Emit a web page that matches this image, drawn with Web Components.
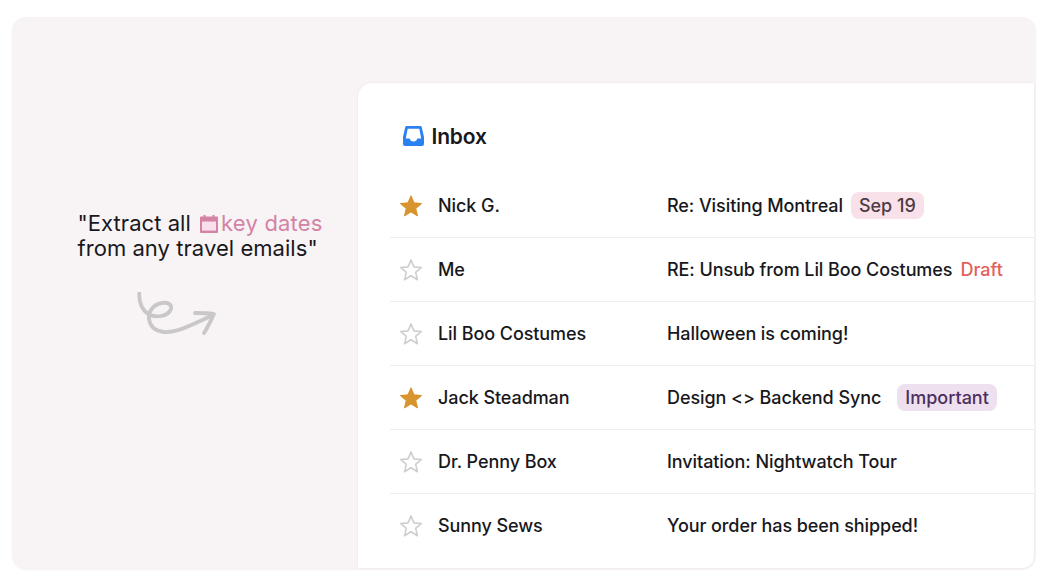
<!DOCTYPE html>
<html>
<head>
<meta charset="utf-8">
<style>
    html, body { margin: 0; background: #fff; }
    body {
        width: 1050px;
        height: 585px;
        box-sizing: border-box;
        padding: 17px 14px 15px 12px;
        font-family: Inter, "Liberation Sans", sans-serif;
        color: #18181c;
        overflow: hidden;
    }
</style>
</head>
<body>
<demo-panel>
    <prompt-note slot="note"></prompt-note>
    <inbox-card>
        <mail-row sender="Nick G." subject="Re: Visiting Montreal" starred>
            <mail-tag kind="date">Sep 19</mail-tag>
        </mail-row>
        <mail-row sender="Me" subject="RE: Unsub from Lil Boo Costumes">
            <mail-tag kind="draft">Draft</mail-tag>
        </mail-row>
        <mail-row sender="Lil Boo Costumes" subject="Halloween is coming!"></mail-row>
        <mail-row sender="Jack Steadman" subject="Design &lt;&gt; Backend Sync" starred>
            <mail-tag kind="important">Important</mail-tag>
        </mail-row>
        <mail-row sender="Dr. Penny Box" subject="Invitation: Nightwatch Tour"></mail-row>
        <mail-row sender="Sunny Sews" subject="Your order has been shipped!" last></mail-row>
    </inbox-card>
</demo-panel>

<script>
// Panel de fondo con la nota a la izquierda y la tarjeta a la derecha
class DemoPanel extends HTMLElement {
    constructor() {
        super();
        this.attachShadow({ mode: 'open' });
        this.shadowRoot.innerHTML = `
            <style>
                :host {
                    display: flex;
                    height: 100%;
                    background: #f8f4f5;
                    border-radius: 14px;
                    overflow: hidden;
                    box-shadow: 0 0 2px rgba(0,0,0,0.03);
                }
                .left { width: 346px; flex: none; }
                .right { flex: 1; min-width: 0; padding: 66px 2px 2px 0; display: flex; }
            </style>
            <div class="left"><slot name="note"></slot></div>
            <div class="right"><slot></slot></div>
        `;
    }
}

class PromptNote extends HTMLElement {
    constructor() {
        super();
        this.attachShadow({ mode: 'open' });
        this.shadowRoot.innerHTML = `
            <style>
                :host {
                    display: block;
                    padding: 194px 0 0 65.5px;
                    font-size: 22px;
                    line-height: 25px;
                    letter-spacing: 0.05px;
                    color: #18181c;
                    white-space: nowrap;
                }
                .key { color: #d482a6; letter-spacing: 0.2px; }
                .cal { width: 18px; height: 18px; vertical-align: -2px; margin: 0 3px 0 3px; }
                .arrow { display: block; margin: 31px 0 0 58px; }
            </style>
            <div>"Extract all <span class="key"><svg class="cal" viewBox="0 0 18 18"><path fill="#f8dfe9" d="M2 6h14v9H2z"/><path fill="#d482a6" d="M3.500 0h2v1.500h7V0h2v1.500H17a1 1 0 0 1 1 1V17a1 1 0 0 1-1 1H1a1 1 0 0 1-1-1V2.500a1 1 0 0 1 1-1h2.500zM2 6.500V15.500h14V6.500z"/></svg>key dates</span></div>
            <div>from any travel emails"</div>
            <svg class="arrow" width="82" height="48" viewBox="0 0 82 48" fill="none" stroke="#c9c7c7" stroke-width="3.800" stroke-linecap="round" stroke-linejoin="round">
                <path d="M3.300 1.300C3 8 5 17 12 22C19 26 32 25 35 17C36 12 31 10 26 11C18 12 12 19 13 27C14 35 20 39 28 40C40 41 56 33 77 23"/>
                <path d="M59 21C66 21 72 21 78 22C75 28 72 35 68 41"/>
            </svg>
        `;
    }
}

class InboxCard extends HTMLElement {
    constructor() {
        super();
        this.attachShadow({ mode: 'open' });
        this.shadowRoot.innerHTML = `
            <style>
                :host {
                    display: block;
                    flex: 1;
                    background: #fff;
                    border-radius: 14px 0 12px 0;
                    box-shadow: 0 0 2px rgba(0,0,0,0.09);
                    padding: 0 0 0 32px;
                }
                .head {
                    display: flex;
                    align-items: center;
                    gap: 7.5px;
                    height: 91px;
                    padding: 15px 0 0 13px;
                    box-sizing: border-box;
                    font-size: 21px;
                    font-weight: 600;
                    letter-spacing: -0.15px;
                    color: #18181c;
                }
            </style>
            <div class="head">
                <svg width="21" height="20" viewBox="0 0 21 20">
                    <path fill="#2a82f2" d="M3.700 0H17.300a1.500 1.500 0 0 1 1.500 1.200L21 11V18a2 2 0 0 1-2 2H2a2 2 0 0 1-2-2V11L2.200 1.200A1.500 1.500 0 0 1 3.700 0z"/>
                    <path fill="#fff" d="M4.700 2.800H16.300L18.200 12.500H14.300c-.4 2-1.700 3-3.800 3s-3.400-1-3.800-3H2.800z"/>
                </svg>
                Inbox
            </div>
            <slot></slot>
        `;
    }
}

class MailRow extends HTMLElement {
    constructor() {
        super();
        this.attachShadow({ mode: 'open' });
    }

    connectedCallback() {
        const starred = this.hasAttribute('starred');
        const starPath = 'M11 1.800l2.700 6.300 6.800.6-5.200 4.500 1.600 6.700L11 16.300l-5.900 3.600 1.600-6.700L1.500 8.700l6.800-.6z';
        const star = starred
            ? `<path fill="#d8942e" stroke="#d8942e" stroke-width="1" stroke-linejoin="round" d="${starPath}"/>`
            : `<path fill="none" stroke="#cfcfd1" stroke-width="1.500" stroke-linejoin="round" d="${starPath}"/>`;

        this.shadowRoot.innerHTML = `
            <style>
                :host {
                    display: grid;
                    grid-template-columns: 48px 229px 1fr;
                    align-items: center;
                    height: 64px;
                    box-sizing: border-box;
                    border-bottom: 1px solid ${this.hasAttribute('last') ? 'transparent' : '#efedef'};
                    font-size: 18px;
                    font-weight: 500;
                    letter-spacing: -0.08px;
                    color: #18181c;
                }
                svg { display: block; margin-left: 9px; }
                .subject { display: flex; align-items: center; white-space: nowrap; }
            </style>
            <svg width="24" height="24" viewBox="0 0 22 22">${star}</svg>
            <div>${this.getAttribute('sender')}</div>
            <div class="subject"><span class="text"></span><slot></slot></div>
        `;
        this.shadowRoot.querySelector('.text').textContent = this.getAttribute('subject');
    }
}

class MailTag extends HTMLElement {
    constructor() {
        super();
        this.attachShadow({ mode: 'open' });
    }

    connectedCallback() {
        const kinds = {
            date: 'margin-left: 8px; background: #f9e1ea; color: #4d3b45; padding: 0 8px; border-radius: 8px; height: 27px;',
            draft: 'margin-left: 8px; color: #e45f5b;',
            important: 'margin-left: 16px; background: #eee0ee; color: #4b2f5f; padding: 0 8px; border-radius: 8px; height: 27px;'
        };
        this.shadowRoot.innerHTML = `
            <style>
                :host {
                    display: inline-flex;
                    align-items: center;
                    letter-spacing: 0;
                    ${kinds[this.getAttribute('kind')]}
                }
            </style>
            <slot></slot>
        `;
    }
}

customElements.define('demo-panel', DemoPanel);
customElements.define('prompt-note', PromptNote);
customElements.define('inbox-card', InboxCard);
customElements.define('mail-row', MailRow);
customElements.define('mail-tag', MailTag);
</script>
</body>
</html>
